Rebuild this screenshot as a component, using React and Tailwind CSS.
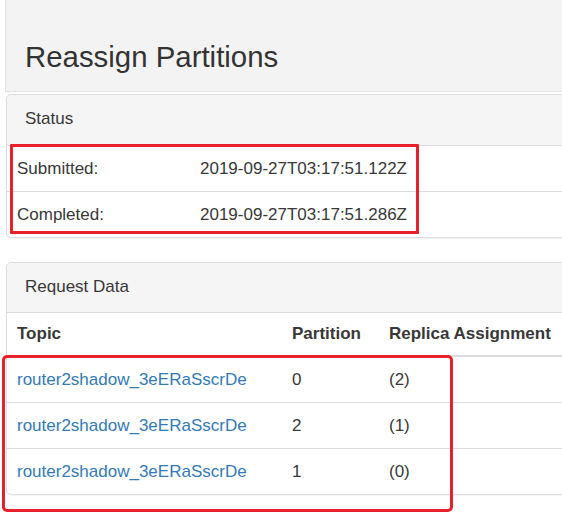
import React from "react";

const status = [
  { label: "Submitted:", value: "2019-09-27T03:17:51.122Z" },
  { label: "Completed:", value: "2019-09-27T03:17:51.286Z" },
];

const requests = [
  { topic: "router2shadow_3eERaSscrDe", partition: 0, replicas: "(2)" },
  { topic: "router2shadow_3eERaSscrDe", partition: 2, replicas: "(1)" },
  { topic: "router2shadow_3eERaSscrDe", partition: 1, replicas: "(0)" },
];

const App = () => {
  return (
    <div className="relative w-[562px] h-[515px] overflow-hidden bg-white font-['Liberation_Sans',Arial,sans-serif] text-[17px] text-[#383838]">
      <div className="ml-[5px] w-[640px] h-[92px] bg-[#f3f3f3] border-l border-b border-[#e2e2e2] pl-[19px] pt-[41px]">
        <h1 className="text-[29.4px] leading-[32px] font-normal text-[#333]">Reassign Partitions</h1>
      </div>

      <div className="ml-[6px] mt-[2px] w-[640px] bg-white border border-[#ddd] rounded-[5px] shadow-[0_1px_1px_rgba(0,0,0,0.05)]">
        <div className="bg-[#f5f5f5] border-b border-[#ddd] rounded-t-[5px] px-[18px] pt-[11px] pb-[13px] leading-[26px]">
          Status
        </div>
        <table className="w-full border-collapse">
          <tbody>
            {status.map((row, i) => (
              <tr key={row.label} className={i > 0 ? "border-t border-[#ddd]" : ""}>
                <td className="w-[183px] px-[10px] py-[10px] leading-[25px]">{row.label}</td>
                <td className="px-[10px] py-[10px] leading-[25px]">{row.value}</td>
              </tr>
            ))}
          </tbody>
        </table>
      </div>

      <div className="ml-[6px] mt-[24px] w-[640px] bg-white border border-[#ddd] rounded-[5px] shadow-[0_1px_1px_rgba(0,0,0,0.05)]">
        <div className="bg-[#f5f5f5] border-b border-[#ddd] rounded-t-[5px] px-[18px] pt-[11px] pb-[13px] leading-[25px]">
          Request Data
        </div>
        <table className="w-full border-collapse text-left">
          <thead>
            <tr className="border-b-2 border-[#ddd]">
              <th className="w-[275px] px-[10px] py-[10px] leading-[22px] font-bold">Topic</th>
              <th className="w-[97px] px-[10px] py-[10px] leading-[22px] font-bold">Partition</th>
              <th className="px-[10px] py-[10px] leading-[22px] font-bold whitespace-nowrap">Replica Assignment</th>
            </tr>
          </thead>
          <tbody>
            {requests.map((r, i) => (
              <tr key={i} className={i > 0 ? "border-t border-[#ddd]" : ""}>
                <td className="px-[10px] py-[10px] leading-[25px]">
                  <a href="#" className="text-[#337ab7]">{r.topic}</a>
                </td>
                <td className="px-[10px] py-[10px] leading-[25px]">{r.partition}</td>
                <td className="px-[10px] py-[10px] leading-[25px]">{r.replicas}</td>
              </tr>
            ))}
          </tbody>
        </table>
      </div>

      {/* annotation boxes */}
      <div className="absolute left-[10px] top-[144px] w-[409px] h-[90px] border-[3px] border-[#e8202a] rounded-[1px] pointer-events-none" />
      <div className="absolute left-[2px] top-[355px] w-[451px] h-[157px] border-[3px] border-[#e8202a] rounded-[5px] pointer-events-none" />
    </div>
  );
};

export default App;
